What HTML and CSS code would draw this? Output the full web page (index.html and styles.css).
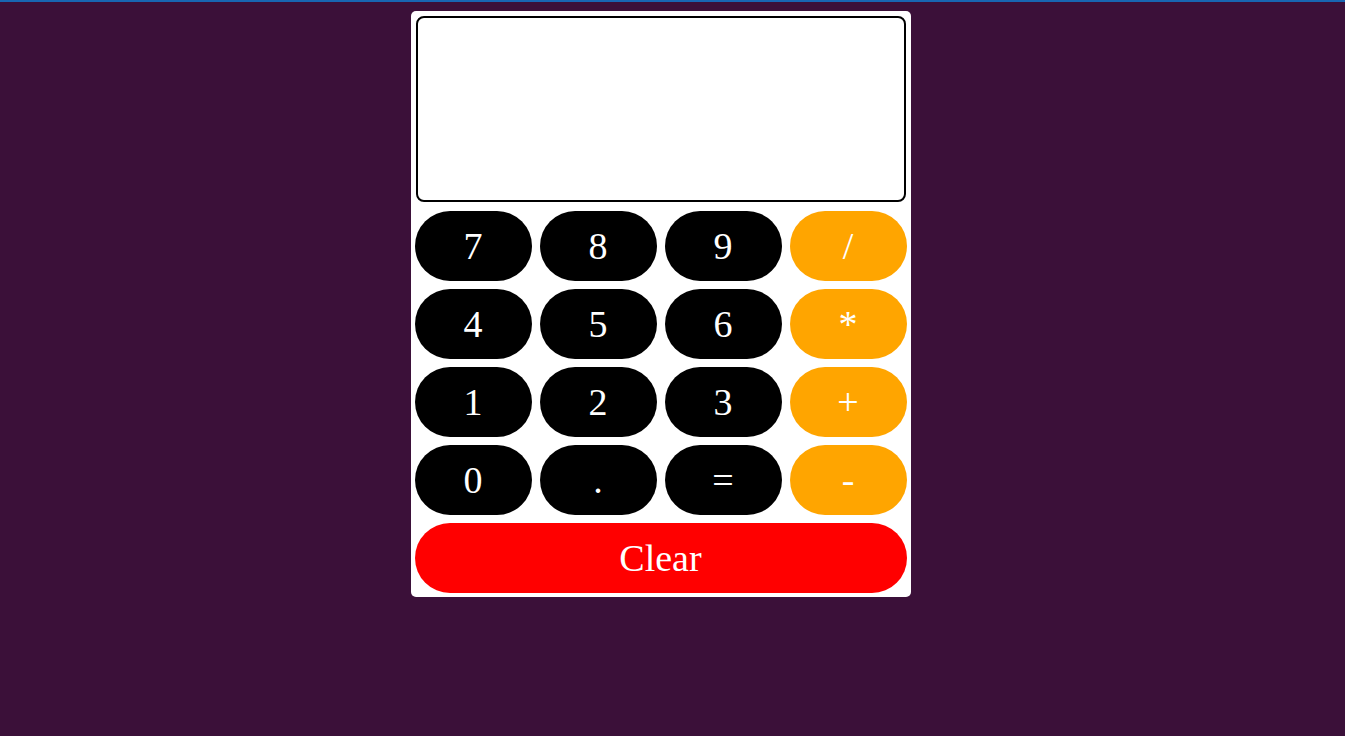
FILE: index.html
```html
<!DOCTYPE html>
<html>
<head>
<meta charset="utf-8">
<link rel="stylesheet" href="styles.css">
</head>
<body>
<div class="topbar"></div>
<div class="calc">
  <div class="display"></div>
  <div class="keys">
    <button class="key">7</button>
    <button class="key">8</button>
    <button class="key">9</button>
    <button class="key op">/</button>
    <button class="key">4</button>
    <button class="key">5</button>
    <button class="key">6</button>
    <button class="key op">*</button>
    <button class="key">1</button>
    <button class="key">2</button>
    <button class="key">3</button>
    <button class="key op">+</button>
    <button class="key">0</button>
    <button class="key">.</button>
    <button class="key">=</button>
    <button class="key op">-</button>
    <button class="key clear">Clear</button>
  </div>
</div>
</body>
</html>
```
FILE: styles.css
```css
html, body {
  margin: 0;
  padding: 0;
  background: #3b1039;
  height: 100%;
}
.topbar {
  height: 2px;
  background: #1866b2;
}
.calc {
  width: 500px;
  box-sizing: border-box;
  margin: 9px auto 0;
  background: #fff;
  border-radius: 5px;
  padding: 5px 4px 4px;
  position: relative;
  left: -12px;
}
.display {
  margin: 0 1px;
  height: 182px;
  border: 2px solid #000;
  border-radius: 8px;
  background: #fff;
}
.keys {
  margin-top: 9px;
  display: grid;
  grid-template-columns: repeat(4, 1fr);
  gap: 8px;
}
.key {
  height: 70px;
  border: none;
  border-radius: 35px;
  background: #000;
  color: #fff;
  font-family: "Liberation Serif", "Times New Roman", serif;
  font-size: 38px;
  padding: 0;
}
.op {
  background: #ffa500;
}
.clear {
  grid-column: 1 / -1;
  background: #ff0000;
}
```
